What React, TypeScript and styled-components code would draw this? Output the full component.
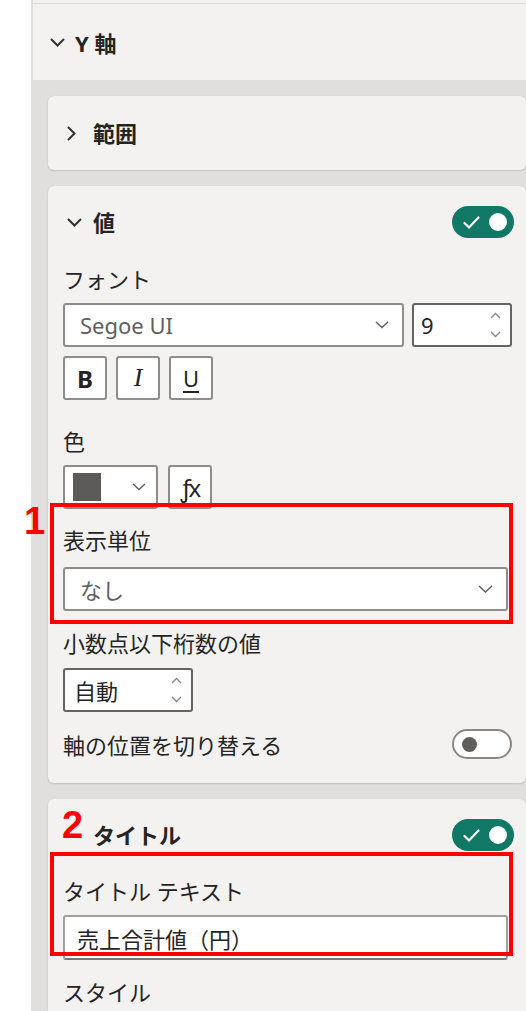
import React from "react";
import styled, { createGlobalStyle } from "styled-components";

const GlobalStyle = createGlobalStyle`
  html, body {
    margin: 0;
    padding: 0;
    background: #ffffff;
    overflow: hidden;
  }
  body {
    font-family: "Noto Sans", "Noto Sans CJK JP", sans-serif;
    color: #252423;
  }
`;

const Page = styled.div`
  display: flex;
  width: 526px;
  height: 1011px;
  overflow: hidden;
  background: #ffffff;
`;

const Gutter = styled.div`
  width: 31px;
  flex: none;
  background: #ffffff;
`;

const Pane = styled.div`
  flex: 1;
  min-width: 0;
  display: flex;
  flex-direction: column;
  background: #e1dfdd;
  padding-left: 2px;
  & > * {
    flex-shrink: 0;
  }
`;

const PrevSectionEdge = styled.div`
  height: 3px;
  background: #f3f2f1;
  border-bottom: 1px solid #dcdad8;
`;

const SectionHeader = styled.div`
  height: 76px;
  display: flex;
  align-items: center;
  gap: 10px;
  padding-left: 17px;
  background: #f3f2f1;
  font-size: 22px;
  font-weight: 700;
  color: #252423;
`;

const CardStack = styled.div`
  display: flex;
  flex-direction: column;
  gap: 16px;
  padding: 16px 0 0 15px;
  & > * {
    flex-shrink: 0;
  }
`;

const Card = styled.section<{ $pt: number; $pb: number; $h?: number }>`
  position: relative;
  display: flex;
  flex-direction: column;
  justify-content: ${(p) => (p.$h ? "center" : "flex-start")};
  ${(p) => (p.$h ? `height: ${p.$h}px; box-sizing: border-box;` : "")}
  background: #f3f2f1;
  border-radius: 6px;
  box-shadow: 0 1px 2px rgba(0, 0, 0, 0.14), 0 0 1px rgba(0, 0, 0, 0.1);
  padding: ${(p) => p.$pt}px 14px ${(p) => p.$pb}px 15px;
  & > * {
    flex-shrink: 0;
  }
`;

const CardHeader = styled.div`
  position: relative;
  display: flex;
  align-items: center;
  height: 32px;
`;

const Lead = styled.span`
  width: 30px;
  flex: none;
  box-sizing: border-box;
  padding-left: 4px;
  display: flex;
  align-items: center;
`;

const CardTitle = styled.span`
  flex: 1;
  font-size: 22px;
  font-weight: 700;
  line-height: 32px;
  color: #252423;
`;

const ToggleOn = styled.span`
  width: 62px;
  height: 32px;
  flex: none;
  box-sizing: border-box;
  border-radius: 16px;
  background: #117865;
  display: flex;
  align-items: center;
  justify-content: space-between;
  padding: 0 7px 0 11px;
  margin-right: -2px;
`;

const ToggleOff = styled.span`
  width: 60px;
  height: 30px;
  flex: none;
  box-sizing: border-box;
  border-radius: 15px;
  background: #ffffff;
  border: 2px solid #8a8886;
  display: flex;
  align-items: center;
  padding-left: 8px;
`;

const Knob = styled.span<{ $size: number; $color: string }>`
  width: ${(p) => p.$size}px;
  height: ${(p) => p.$size}px;
  border-radius: 50%;
  background: ${(p) => p.$color};
`;

const Label = styled.div<{ $mt: number }>`
  margin-top: ${(p) => p.$mt}px;
  font-size: 22px;
  line-height: 28px;
  color: #252423;
  white-space: nowrap;
`;

const Row = styled.div<{ $mt: number; $gap: number }>`
  display: flex;
  align-items: center;
  gap: ${(p) => p.$gap}px;
  margin-top: ${(p) => p.$mt}px;
`;

const SelectBox = styled.div<{ $w: number; $mt?: number }>`
  box-sizing: border-box;
  width: ${(p) => p.$w}px;
  height: 44px;
  margin-top: ${(p) => p.$mt ?? 0}px;
  flex: none;
  display: flex;
  align-items: center;
  background: #ffffff;
  border: 2px solid #8f8d8b;
  border-radius: 3px;
  padding: 0 13px 0 15px;
  font-size: 22px;
  color: #605e5c;
`;

const SelectText = styled.span`
  flex: 1;
  white-space: nowrap;
`;

const Spinner = styled.div<{ $w: number; $pl: number }>`
  box-sizing: border-box;
  width: ${(p) => p.$w}px;
  height: 44px;
  flex: none;
  display: flex;
  align-items: center;
  background: #ffffff;
  border: 2px solid #666462;
  border-radius: 3px;
  padding: 0 9px 0 ${(p) => p.$pl}px;
  font-size: 22px;
  color: #252423;
`;

const SpinnerValue = styled.span`
  flex: 1;
`;

const IconButton = styled.div`
  box-sizing: border-box;
  width: 44px;
  height: 44px;
  flex: none;
  display: flex;
  align-items: center;
  justify-content: center;
  background: #ffffff;
  border: 2px solid #8f8d8b;
  border-radius: 3px;
  color: #252423;
`;

const BoldGlyph = styled.span`
  font-family: "Noto Sans", sans-serif;
  font-weight: 700;
  font-size: 24px;
`;

const ItalicGlyph = styled.span`
  font-family: "Liberation Serif", serif;
  font-style: italic;
  font-size: 26px;
`;

const UnderlineGlyph = styled.span`
  font-family: "Noto Sans", sans-serif;
  font-size: 22px;
  text-decoration: underline;
  text-underline-offset: 4px;
  text-decoration-thickness: 2px;
`;

const FxGlyph = styled.span`
  font-family: "Noto Sans", sans-serif;
  font-size: 24px;
  letter-spacing: -2px;
`;

const ColorPicker = styled.div`
  box-sizing: border-box;
  width: 95px;
  height: 44px;
  flex: none;
  display: flex;
  align-items: center;
  justify-content: space-between;
  background: #ffffff;
  border: 2px solid #8f8d8b;
  border-radius: 3px;
  padding: 0 10px 0 8px;
`;

const Swatch = styled.span`
  width: 28px;
  height: 28px;
  background: #5c5b5a;
`;

const TextInput = styled.div<{ $mt: number }>`
  box-sizing: border-box;
  width: 445px;
  height: 45px;
  margin-top: ${(p) => p.$mt}px;
  display: flex;
  align-items: center;
  background: #ffffff;
  border: 2px solid #a19f9d;
  border-bottom-color: #7a7876;
  border-radius: 3px;
  padding-left: 12px;
  font-size: 22px;
  color: #252423;
  white-space: nowrap;
`;

const ToggleRow = styled.div<{ $mt: number }>`
  display: flex;
  align-items: center;
  justify-content: space-between;
  height: 32px;
  margin-top: ${(p) => p.$mt}px;
  font-size: 22px;
  color: #252423;
`;

const Annotated = styled.div<{ $mt: number }>`
  position: relative;
  display: flex;
  flex-direction: column;
  margin-top: ${(p) => p.$mt}px;
`;

const RedFrame = styled.div<{ $t: number; $r: number; $b: number; $l: number }>`
  position: absolute;
  top: ${(p) => p.$t}px;
  right: ${(p) => p.$r}px;
  bottom: ${(p) => p.$b}px;
  left: ${(p) => p.$l}px;
  border: 4px solid #ff0000;
  pointer-events: none;
`;

const Callout = styled.span<{ $t: number; $l: number }>`
  position: absolute;
  top: ${(p) => p.$t}px;
  left: ${(p) => p.$l}px;
  font-family: "Liberation Sans", sans-serif;
  font-weight: 700;
  font-size: 38px;
  line-height: 1;
  color: #ff0000;
`;

const ChevronDown = () => (
  <svg width="15" height="9" viewBox="0 0 15 9">
    <polyline points="1,1 7.5,7.5 14,1" fill="none" stroke="#323130" strokeWidth="2" />
  </svg>
);

const ChevronRight = () => (
  <svg width="9" height="15" viewBox="0 0 9 15">
    <polyline points="1,1 7.5,7.5 1,14" fill="none" stroke="#323130" strokeWidth="2" />
  </svg>
);

const DropChevron = () => (
  <svg width="15" height="8" viewBox="0 0 15 8">
    <polyline points="1,1 7.5,7 14,1" fill="none" stroke="#605e5c" strokeWidth="1.4" />
  </svg>
);

const SmallDropChevron = () => (
  <svg width="14" height="8" viewBox="0 0 14 8">
    <polyline points="1,1 7,6.5 13,1" fill="none" stroke="#605e5c" strokeWidth="1.4" />
  </svg>
);

const SpinArrows = () => (
  <svg width="11" height="26" viewBox="0 0 11 26">
    <polyline points="1,6 5.5,1.5 10,6" fill="none" stroke="#8a8886" strokeWidth="1.3" />
    <polyline points="1,20 5.5,24.5 10,20" fill="none" stroke="#8a8886" strokeWidth="1.3" />
  </svg>
);

const Check = () => (
  <svg width="17" height="13" viewBox="0 0 17 13">
    <polyline
      points="1.5,7 6,11.5 15.5,1.5"
      fill="none"
      stroke="#ffffff"
      strokeWidth="2.2"
      strokeLinecap="round"
      strokeLinejoin="round"
    />
  </svg>
);

const SwitchOn = () => (
  <ToggleOn>
    <Check />
    <Knob $size={18} $color="#ffffff" />
  </ToggleOn>
);

const SwitchOff = () => (
  <ToggleOff>
    <Knob $size={15} $color="#605e5c" />
  </ToggleOff>
);

export default function App() {
  return (
    <>
      <GlobalStyle />
      <Page>
        <Gutter />
        <Pane>
          <PrevSectionEdge />
          <SectionHeader>
            <ChevronDown />
            <span>Y 軸</span>
          </SectionHeader>
          <CardStack>
            <Card $pt={0} $pb={0} $h={74}>
              <CardHeader>
                <Lead>
                  <ChevronRight />
                </Lead>
                <CardTitle>範囲</CardTitle>
              </CardHeader>
            </Card>

            <Card $pt={20} $pb={23}>
              <CardHeader>
                <Lead>
                  <ChevronDown />
                </Lead>
                <CardTitle>値</CardTitle>
                <SwitchOn />
              </CardHeader>

              <Label $mt={27}>フォント</Label>
              <Row $mt={10} $gap={8}>
                <SelectBox $w={341}>
                  <SelectText>Segoe UI</SelectText>
                  <SmallDropChevron />
                </SelectBox>
                <Spinner $w={100} $pl={7}>
                  <SpinnerValue>9</SpinnerValue>
                  <SpinArrows />
                </Spinner>
              </Row>
              <Row $mt={9} $gap={9}>
                <IconButton>
                  <BoldGlyph>B</BoldGlyph>
                </IconButton>
                <IconButton>
                  <ItalicGlyph>I</ItalicGlyph>
                </IconButton>
                <IconButton>
                  <UnderlineGlyph>U</UnderlineGlyph>
                </IconButton>
              </Row>

              <Label $mt={27}>色</Label>
              <Row $mt={10} $gap={10}>
                <ColorPicker>
                  <Swatch />
                  <SmallDropChevron />
                </ColorPicker>
                <IconButton>
                  <FxGlyph>ƒx</FxGlyph>
                </IconButton>
              </Row>

              <Annotated $mt={17}>
                <Label $mt={0}>表示単位</Label>
                <SelectBox $w={445} $mt={13}>
                  <SelectText>なし</SelectText>
                  <DropChevron />
                </SelectBox>
                <RedFrame $t={-23} $r={-1} $b={-13} $l={-13} />
                <Callout $t={-24} $l={-39}>1</Callout>
              </Annotated>

              <Label $mt={18}>小数点以下桁数の値</Label>
              <Row $mt={11} $gap={0}>
                <Spinner $w={130} $pl={9}>
                  <SpinnerValue>自動</SpinnerValue>
                  <SpinArrows />
                </Spinner>
              </Row>

              <ToggleRow $mt={16}>
                <span>軸の位置を切り替える</span>
                <SwitchOff />
              </ToggleRow>
            </Card>

            <Card $pt={20} $pb={40}>
              <CardHeader>
                <Lead />
                <CardTitle>タイトル</CardTitle>
                <SwitchOn />
                <Callout $t={-13} $l={-1}>2</Callout>
              </CardHeader>

              <Annotated $mt={26}>
                <Label $mt={0}>タイトル テキスト</Label>
                <TextInput $mt={10}>売上合計値（円）</TextInput>
                <RedFrame $t={-25} $r={-1} $b={4} $l={-13} />
              </Annotated>

              <Label $mt={18}>スタイル</Label>
            </Card>
          </CardStack>
        </Pane>
      </Page>
    </>
  );
}
